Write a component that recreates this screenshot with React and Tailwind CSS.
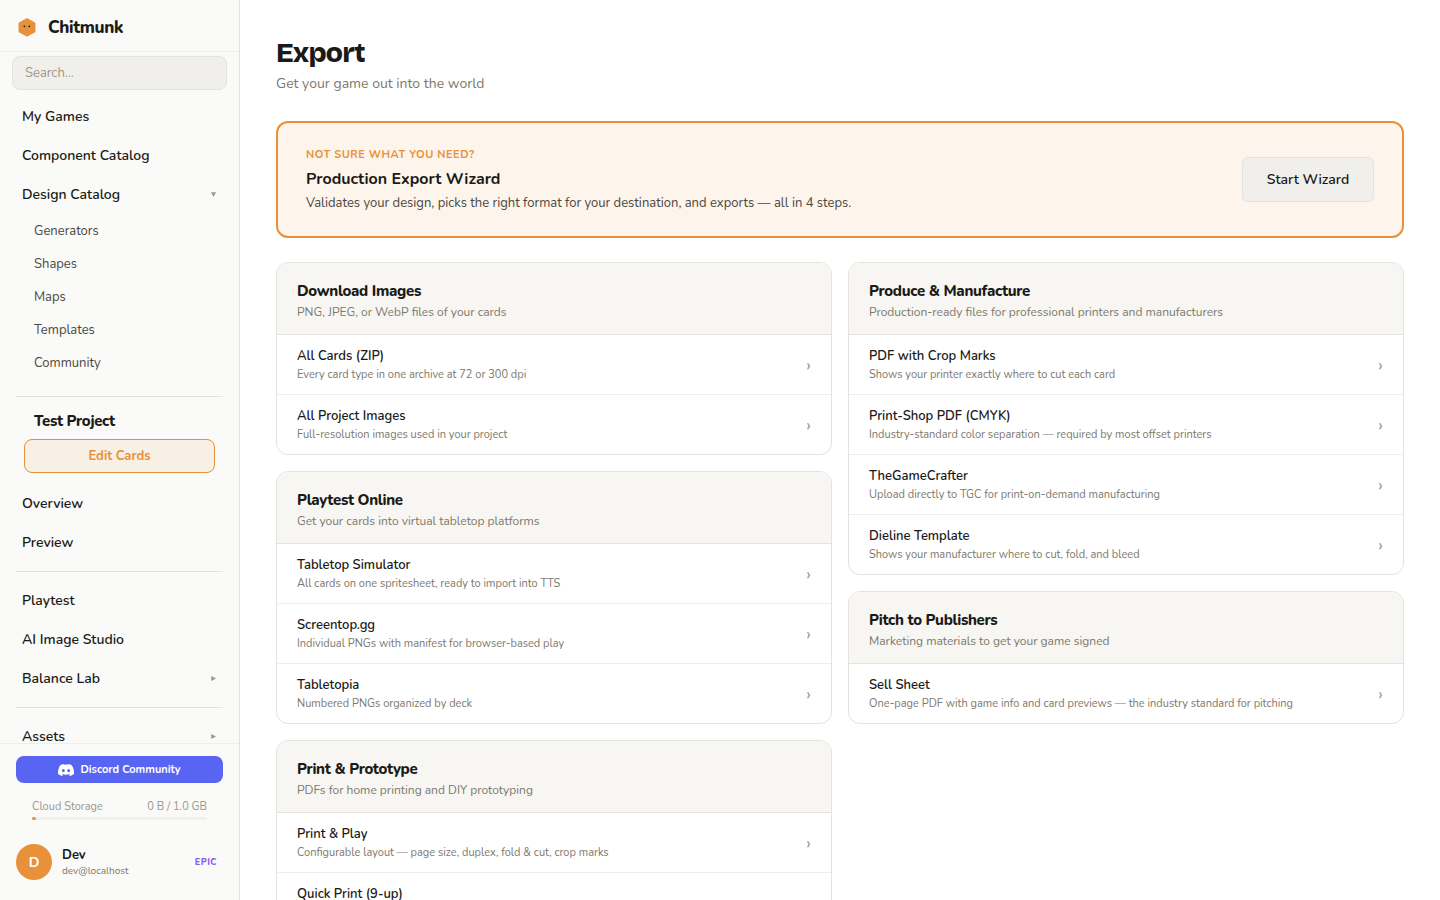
import { SiDiscord } from 'react-icons/si';

const leftGroups = [
  {
    title: 'Download Images',
    text: 'PNG, JPEG, or WebP files of your cards',
    items: [
      ['All Cards (ZIP)', 'Every card type in one archive at 72 or 300 dpi'],
      ['All Project Images', 'Full-resolution images used in your project'],
    ],
  },
  {
    title: 'Playtest Online',
    text: 'Get your cards into virtual tabletop platforms',
    items: [
      ['Tabletop Simulator', 'All cards on one spritesheet, ready to import into TTS'],
      ['Screentop.gg', 'Individual PNGs with manifest for browser-based play'],
      ['Tabletopia', 'Numbered PNGs organized by deck'],
    ],
  },
  {
    title: 'Print & Prototype',
    text: 'PDFs for home printing and DIY prototyping',
    items: [
      ['Print & Play', 'Configurable layout — page size, duplex, fold & cut, crop marks'],
      ['Quick Print (9-up)', ''],
    ],
  },
];

const rightGroups = [
  {
    title: 'Produce & Manufacture',
    text: 'Production-ready files for professional printers and manufacturers',
    items: [
      ['PDF with Crop Marks', 'Shows your printer exactly where to cut each card'],
      ['Print-Shop PDF (CMYK)', 'Industry-standard color separation — required by most offset printers'],
      ['TheGameCrafter', 'Upload directly to TGC for print-on-demand manufacturing'],
      ['Dieline Template', 'Shows your manufacturer where to cut, fold, and bleed'],
    ],
  },
  {
    title: 'Pitch to Publishers',
    text: 'Marketing materials to get your game signed',
    items: [['Sell Sheet', 'One-page PDF with game info and card previews — the industry standard for pitching']],
  },
];

function Triangle({ open }) {
  return (
    <svg viewBox="0 0 6 6" className="mr-[7px] size-[5px] fill-[#9c978a]">
      <path d={open ? 'M0 0.3H6L3 6Z' : 'M0.3 0L6 3L0.3 6Z'} />
    </svg>
  );
}

function NavItem({ label, arrow }) {
  return (
    <a className="flex h-[39px] shrink-0 items-center justify-between pl-[22px] pr-4 text-[14px] font-semibold">
      <span>{label}</span>
      {arrow && <Triangle open={arrow === 'open'} />}
    </a>
  );
}

function Divider({ className }) {
  return <div className={`mx-4 h-px shrink-0 bg-[#e5e3de] ${className}`} />;
}

function Group({ group }) {
  return (
    <section className="overflow-hidden rounded-xl border border-[#e5e3de] bg-white">
      <header className="h-[72px] border-b border-[#e5e3de] bg-[#f7f6f3] px-5 pt-[17px]">
        <h2 className="text-[15px] leading-[22px] font-extrabold tracking-[-0.3px]">{group.title}</h2>
        <p className="text-[12px] leading-[20px] text-[#7d786c]">{group.text}</p>
      </header>
      <div className="divide-y divide-[#efeeea]">
        {group.items.map(([title, text]) => (
          <a key={title} className="flex h-[60px] justify-between px-5 last:h-[59px]">
            <div className="pt-[11px]">
              <div className="text-[13px] leading-[20px] font-semibold">{title}</div>
              <div className="text-[11px] leading-[17px] text-[#7d786c]">{text}</div>
            </div>
            <span className="pt-[18px] text-[18px] leading-[24px] text-[#9c978a]">›</span>
          </a>
        ))}
      </div>
    </section>
  );
}

export default function App() {
  return (
    <div className="flex h-screen w-full overflow-hidden bg-white font-[Nunito,Lato,sans-serif] text-[#1a1a17]">
      <aside className="flex w-60 shrink-0 flex-col border-r border-[#e5e3de] bg-[#fafaf8]">
        <div className="flex h-[52px] shrink-0 items-center border-b border-[#efeeea] pt-[3px] pl-[18px]">
          <svg viewBox="0 0 18 20" className="h-5 w-[18px]">
            <path d="M9 1.6L17 6V14.8L9 19.2L1 14.8V6Z" fill="#e8913a" stroke="#e8913a" strokeLinejoin="round" />
            <circle cx="6.4" cy="9.3" r="0.9" fill="#1a1a17" />
            <circle cx="11.3" cy="9.3" r="0.9" fill="#1a1a17" />
          </svg>
          <span className="ml-3 pt-px text-[17px] font-extrabold tracking-[-0.34px]">Chitmunk</span>
        </div>
        <div className="mx-3 mt-1 flex h-[34px] shrink-0 items-center rounded-lg border border-[#e5e3de] bg-[#f0efeb] px-3 pt-px text-[13px] text-[#9c978a]">
          Search...
        </div>
        <nav className="flex min-h-0 flex-1 flex-col overflow-hidden pt-[7px]">
          <NavItem label="My Games" />
          <NavItem label="Component Catalog" />
          <NavItem label="Design Catalog" arrow="open" />
          {['Generators', 'Shapes', 'Maps', 'Templates', 'Community'].map((t) => (
            <a key={t} className="flex h-[33px] shrink-0 items-center pt-[2px] pl-[34px] text-[13px] text-[#4a4840]">{t}</a>
          ))}
          <Divider className="mt-[17px]" />
          <div className="mt-[13px] h-[22px] shrink-0 pl-[34px] text-[15px] leading-[22px] font-extrabold tracking-[-0.3px]">Test Project</div>
          <button className="mx-6 mt-[7px] flex h-[34px] shrink-0 items-center justify-center rounded-lg border border-[#e8913a] bg-[#f8efe5] pt-px text-[13px] font-bold text-[#e8913a]">
            Edit Cards
          </button>
          <div className="h-[11px] shrink-0" />
          <NavItem label="Overview" />
          <NavItem label="Preview" />
          <Divider className="mt-[9px] mb-[9px]" />
          <NavItem label="Playtest" />
          <NavItem label="AI Image Studio" />
          <NavItem label="Balance Lab" arrow="closed" />
          <Divider className="mt-[9px] mb-[9px]" />
          <NavItem label="Assets" arrow="closed" />
        </nav>
        <div className="flex h-[157px] shrink-0 flex-col border-t border-[#efeeea] px-4 pt-3">
          <a className="flex h-[27px] items-center justify-center gap-[6px] rounded-lg bg-[#5865f2] text-[11px] font-bold text-white">
            <SiDiscord size={16} />
            <span className="pt-px">Discord Community</span>
          </a>
          <div className="mt-[16px] flex h-4 items-center justify-between px-4 text-[11px] text-[#9c978a]">
            <span>Cloud Storage</span>
            <span>0 B / 1.0 GB</span>
          </div>
          <div className="mx-4 mt-[2px] h-[3px] shrink-0 rounded-full bg-[#f0efeb]">
            <div className="h-[3px] w-1 rounded-full bg-[#e8913a]" />
          </div>
          <div className="mt-6 flex h-9 items-center">
            <div className="flex size-9 items-center justify-center rounded-full bg-[#e8913a] text-[14px] font-bold text-white">D</div>
            <div className="ml-[10px] flex-1">
              <div className="text-[13px] leading-[18px] font-bold">Dev</div>
              <div className="text-[10px] leading-[14px] text-[#7d786c]">dev@localhost</div>
            </div>
            <span className="mr-[6px] pt-px text-[9px] font-extrabold tracking-[0.5px] text-[#8b5cf6]">EPIC</span>
          </div>
        </div>
      </aside>

      <main className="min-w-0 flex-1 overflow-hidden px-9 pt-9">
        <h1 className="h-[34px] font-['Bricolage_Grotesque',Inter,sans-serif] text-[28px] leading-[34px] font-extrabold tracking-[-0.84px]">Export</h1>
        <p className="mt-[3px] h-[21px] text-[14px] leading-[21px] text-[#7d786c]">Get your game out into the world</p>
        <section className="mt-[27px] flex h-[117px] items-center justify-between rounded-xl border-2 border-[#e8913a] bg-[#fdf4eb] px-7">
          <div>
            <div className="pt-px text-[11px] leading-[17px] font-bold tracking-[0.5px] text-[#e8913a]">NOT SURE WHAT YOU NEED?</div>
            <h2 className="mt-[2px] text-[16px] leading-[28px] font-bold">Production Export Wizard</h2>
            <p className="text-[13px] leading-[21px] text-[#4a4840]">
              Validates your design, picks the right format for your destination, and exports — all in 4 steps.
            </p>
          </div>
          <button className="h-[45px] w-[132px] rounded-md border border-[#e5e3de] bg-[#f0efeb] text-[14px] font-semibold">Start Wizard</button>
        </section>
        <div className="mt-6 grid grid-cols-2 items-start gap-4">
          <div className="flex flex-col gap-4">
            {leftGroups.map((g) => <Group key={g.title} group={g} />)}
          </div>
          <div className="flex flex-col gap-4">
            {rightGroups.map((g) => <Group key={g.title} group={g} />)}
          </div>
        </div>
      </main>
    </div>
  );
}
